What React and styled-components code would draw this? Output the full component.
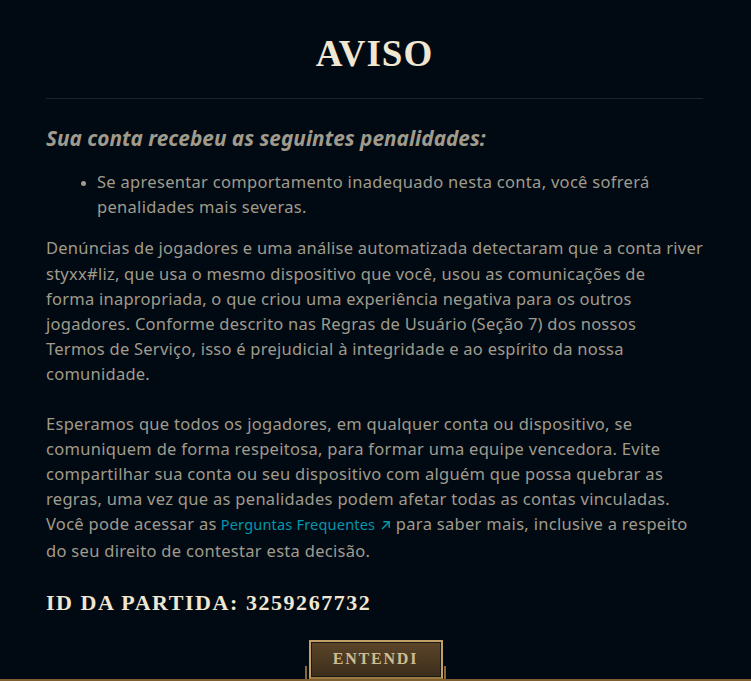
import React from "react";
import styled, { createGlobalStyle } from "styled-components";

const Global = createGlobalStyle`
  html, body {
    margin: 0;
    padding: 0;
    background: #010a13;
  }
  #root {
    min-height: 681px;
    background: #010a13;
  }
`;

const Dialog = styled.div`
  box-sizing: border-box;
  width: 751px;
  height: 681px;
  overflow: hidden;
  display: flex;
  flex-direction: column;
  padding: 33px 48px 0 46px;
  background: #010a13;
  font-family: "Noto Sans", "Open Sans", sans-serif;

  & > * {
    flex-shrink: 0;
  }
`;

const Title = styled.h1`
  margin: 0;
  text-align: center;
  font-family: "Liberation Serif", "Times New Roman", serif;
  font-weight: 700;
  font-size: 37px;
  line-height: 41px;
  letter-spacing: 1px;
  color: #f0e6d2;
`;

const Divider = styled.hr`
  margin: 24px 0 0;
  border: 0;
  height: 1px;
  background: #1e2328;
`;

const Subtitle = styled.h2`
  margin: 25px 0 0;
  font-family: "Noto Sans", "Open Sans", sans-serif;
  font-style: italic;
  font-weight: 700;
  font-size: 20.8px;
  line-height: 28px;
  color: #a09b8c;
`;

const BulletList = styled.ul`
  margin: 17px 0 0;
  padding-left: 51px;
  list-style: disc;
`;

const Bullet = styled.li`
  font-size: 16.5px;
  line-height: 25.2px;
  letter-spacing: 0.3px;
  white-space: nowrap;
  color: #a09b8c;
  &::marker {
    font-size: 13px;
  }
`;

const Paragraph = styled.p`
  margin: ${(p) => p.$gap}px 0 0;
  font-size: 16.5px;
  line-height: 25.2px;
  letter-spacing: ${(p) => p.$tracking ?? 0.3}px;
  white-space: nowrap;
  color: #a09b8c;
`;

const Link = styled.a`
  color: #0397ab;
  font-size: 14.5px;
  letter-spacing: 0.2px;
  text-decoration: none;
  display: inline-flex;
  align-items: center;
  gap: 6px;
  margin-left: 4px;
`;

const MatchId = styled.h3`
  margin: 26px 0 0;
  font-family: "Liberation Serif", "Times New Roman", serif;
  font-weight: 700;
  font-size: 22px;
  line-height: 28px;
  letter-spacing: 1.55px;
  color: #f0e6d2;
`;

const Footer = styled.div`
  margin: 23px -48px 0 -46px;
  display: flex;
  justify-content: center;
  border-bottom: 2px solid #7f6030;
`;

const ButtonFrame = styled.div`
  position: relative;
  display: flex;

  &::before,
  &::after {
    content: "";
    position: absolute;
    bottom: 0;
    width: 2px;
    height: 13px;
    background: #8a6a34;
  }
  &::before {
    left: -4px;
  }
  &::after {
    right: -3px;
  }
`;

const Button = styled.button`
  box-sizing: border-box;
  width: 134px;
  height: 39px;
  padding: 0;
  border: 2px solid #c2a065;
  border-bottom-color: #9a7840;
  box-shadow: inset 0 0 0 1px #1a1a17;
  background: linear-gradient(180deg, #5b4528 0%, #4a3821 55%, #3a2d1b 100%);
  font-family: "Liberation Serif", "Times New Roman", serif;
  font-weight: 700;
  font-size: 16px;
  letter-spacing: 1.8px;
  color: #cdbe91;
  cursor: pointer;
`;

const ExternalArrow = () => (
  <svg width="10" height="10" viewBox="0 0 10 10" fill="none">
    <path
      d="M1.5 8.5 L8 2 M3 1.8 H8.2 V7"
      stroke="#0397ab"
      strokeWidth="1.5"
      strokeLinecap="square"
    />
  </svg>
);

export default function App() {
  return (
    <>
      <Global />
      <Dialog>
        <Title>AVISO</Title>
        <Divider />
        <Subtitle>Sua conta recebeu as seguintes penalidades:</Subtitle>
        <BulletList>
          <Bullet>
            Se apresentar comportamento inadequado nesta conta, você sofrerá
            <br />
            penalidades mais severas.
          </Bullet>
        </BulletList>
        <Paragraph $gap={16} $tracking={0.25}>
          Denúncias de jogadores e uma análise automatizada detectaram que a conta river
          <br />
          styxx#liz, que usa o mesmo dispositivo que você, usou as comunicações de
          <br />
          forma inapropriada, o que criou uma experiência negativa para os outros
          <br />
          jogadores. Conforme descrito nas Regras de Usuário (Seção 7) dos nossos
          <br />
          Termos de Serviço, isso é prejudicial à integridade e ao espírito da nossa
          <br />
          comunidade.
        </Paragraph>
        <Paragraph $gap={24}>
          Esperamos que todos os jogadores, em qualquer conta ou dispositivo, se
          <br />
          comuniquem de forma respeitosa, para formar uma equipe vencedora. Evite
          <br />
          compartilhar sua conta ou seu dispositivo com alguém que possa quebrar as
          <br />
          regras, uma vez que as penalidades podem afetar todas as contas vinculadas.
          <br />
          Você pode acessar as
          <Link href="#">
            Perguntas Frequentes
            <ExternalArrow />
          </Link>{" "}
          para saber mais, inclusive a respeito
          <br />
          do seu direito de contestar esta decisão.
        </Paragraph>
        <MatchId>ID DA PARTIDA: 3259267732</MatchId>
        <Footer>
          <ButtonFrame>
            <Button>ENTENDI</Button>
          </ButtonFrame>
        </Footer>
      </Dialog>
    </>
  );
}
